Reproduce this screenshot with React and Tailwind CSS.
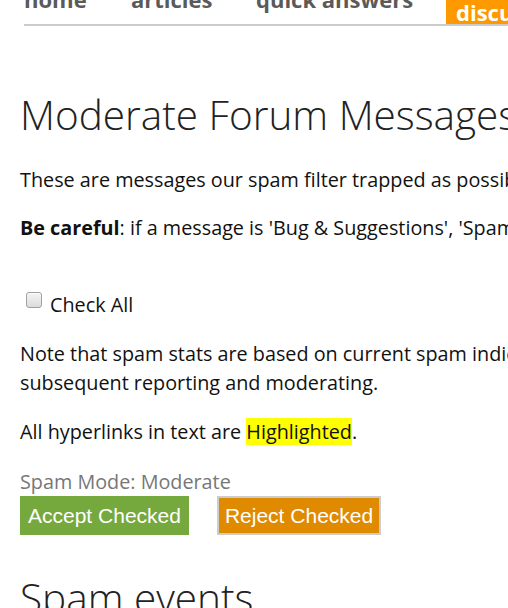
export default function App() {
  const navItems = [
    { label: 'home', width: 'w-[107px]' },
    { label: 'articles', width: 'w-[125px]' },
    { label: 'quick answers', width: 'w-[190px]' },
  ];

  return (
    <div className="w-[508px] h-[608px] overflow-hidden bg-white">
      <div className="w-[1000px] font-['Open_Sans',sans-serif] text-[#111]">
        {/* Top nav, clipped at the top edge */}
        <div className="ml-6 flex items-end h-[26px] overflow-hidden border-b-2 border-[#cccccc]">
          {navItems.map((item) => (
            <div
              key={item.label}
              className={`${item.width} shrink-0 pb-[13px] text-[22px] leading-[24px] font-bold text-[#5a5a5a] whitespace-nowrap`}
            >
              {item.label}
            </div>
          ))}
          <div className="h-6 bg-[#ff9900] px-[10px] pb-[13px] text-[22px] leading-[24px] font-bold text-white">
            discussions
          </div>
        </div>

        <div className="px-5">
          <h1 className="mt-[61px] text-[40.5px] leading-[56px] font-light text-[#222] whitespace-nowrap">
            Moderate Forum Messages
          </h1>

          <p className="mt-[22px] text-[19.8px] leading-[29px] whitespace-nowrap">
            These are messages our spam filter trapped as possible spam. Please review them and accept or reject.
          </p>
          <p className="mt-[19px] text-[19.8px] leading-[29px] whitespace-nowrap">
            <b>Be careful</b>: if a message is 'Bug &amp; Suggestions', 'Spam and Abuse Watch' or similar, please check carefully.
          </p>

          <label className="mt-[48px] ml-[6px] flex items-start gap-2 text-[19.8px] leading-[29px]">
            <span className="mt-[2px] w-4 h-4 rounded-[3px] border border-[#a0a0a0] bg-gradient-to-b from-[#f4f4f4] to-[#dcdcdc] shadow-[inset_0_1px_1px_rgba(255,255,255,0.8)]" />
            Check All
          </label>

          <p className="mt-[20px] text-[19.8px] leading-[29px]">
            Note that spam stats are based on current spam indicators and may not reflect
            <br />
            subsequent reporting and moderating.
          </p>

          <p className="mt-[20px] text-[19.8px] leading-[29px]">
            All hyperlinks in text are <span className="bg-[#ffff00]">Highlighted</span>.
          </p>

          <div className="mt-[25px] text-[19.8px] leading-[22px] text-[#777]">Spam Mode: Moderate</div>

          <div className="mt-[3px] flex items-start gap-[28px] font-['Liberation_Sans',Arial,sans-serif] text-[21px] text-white">
            <button className="h-[39px] px-2 bg-[#76a93d] leading-[39px]">Accept Checked</button>
            <button className="h-[39px] px-[6px] bg-[#e08a00] border-2 border-[#cccccc] leading-[35px]">Reject Checked</button>
          </div>

          <h2 className="mt-[35px] text-[40.5px] leading-[56px] font-light text-[#222] whitespace-nowrap">
            Spam events
          </h2>
        </div>
      </div>
    </div>
  );
}
